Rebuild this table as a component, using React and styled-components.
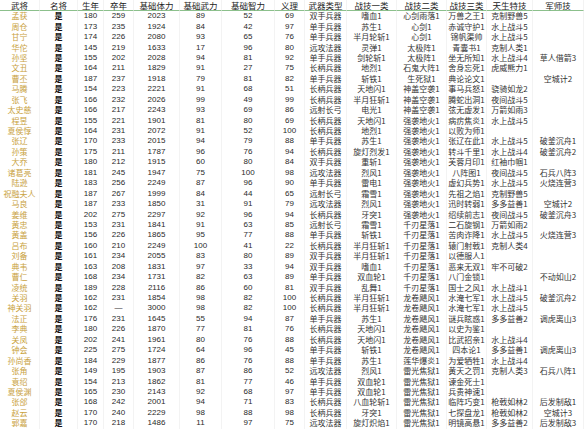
import styled, { createGlobalStyle } from "styled-components";

const GlobalStyle = createGlobalStyle`
  html, body {
    margin: 0;
    padding: 0;
    background: #fff;
  }
  body {
    font-family: "Noto Sans CJK SC", sans-serif;
  }
`;

const widths = [40, 38, 26, 30, 46, 42, 53, 30, 42, 50, 50, 40, 46, 51];

const headers = [
  "武将", "名将", "生年", "卒年", "基础体力", "基础武力", "基础智力",
  "义理", "武器类型", "战技一类", "战技二类", "战技三类", "天生特技", "军师技",
];

const rows = [
  ["孟获", "是", "180", "259", "2023", "89", "52", "69", "双手兵器", "嗜血1", "心剑雨落1", "万兽之王1", "克制野兽5", ""],
  ["周仓", "是", "173", "235", "1924", "84", "42", "97", "单手兵器", "苏生1", "心剑1", "赤诚守护1", "水上战斗5", ""],
  ["甘宁", "是", "174", "226", "2080", "93", "65", "76", "单手兵器", "半月轮斩1", "心剑1", "锦帆渠帅", "水上战斗5", ""],
  ["华佗", "是", "145", "219", "1633", "17", "96", "80", "远攻法器", "灵弹1", "太极阵1", "青囊书1", "克制人类1", ""],
  ["孙坚", "是", "155", "202", "2028", "94", "81", "92", "单手兵器", "剑轮斩1", "太极阵1", "坐无所知1", "水上战斗4", "草人借箭3"],
  ["文丑", "是", "164", "211", "1829", "91", "27", "75", "长柄兵器", "地烈1", "石鬼大阵1", "舍身忘死1", "虎威熊力1", ""],
  ["曹丕", "是", "187", "237", "1918", "79", "81", "82", "单手兵器", "斩铁1", "生死狱1", "典论论文1", "", "空城计2"],
  ["马腾", "是", "154", "223", "2221", "91", "68", "51", "长柄兵器", "天地闪1", "神盖空袭1", "事马兵怒1", "骁骑如龙2", ""],
  ["张飞", "是", "166", "232", "2026", "99", "49", "99", "长柄兵器", "半月狂斩1", "神盖空袭1", "腾蛇出洞1", "夜间战斗5", ""],
  ["太史慈", "是", "166", "217", "2243", "93", "69", "86", "远射长弓", "电光1", "神盖空袭1", "弦无虚发1", "万箭如雨3", ""],
  ["程昱", "是", "155", "221", "1901", "81", "80", "69", "长柄兵器", "天地闪1", "强袭地火1", "病疠焦炎1", "水上战斗5", ""],
  ["夏侯惇", "是", "164", "231", "2072", "91", "52", "100", "长柄兵器", "地烈1", "强袭地火1", "以败为师1", "", ""],
  ["张辽", "是", "170", "233", "2015", "94", "79", "88", "单手兵器", "苏生1", "强袭地火1", "张辽在此1", "水上战斗5", "破釜沉舟1"],
  ["孙策", "是", "175", "211", "1787", "96", "76", "94", "长柄兵器", "旋灯烈发1", "强袭地火1", "转斗千里1", "水上战斗4", "破釜沉舟2"],
  ["大乔", "是", "180", "212", "1915", "60", "80", "84", "双手兵器", "重斩1", "强袭地火1", "芙蓉月印1", "红袖巾帼1", ""],
  ["诸葛亮", "是", "181", "245", "1947", "75", "100", "98", "远攻法器", "烈风1", "强袭地火1", "八阵图1", "夜间战斗5", "石兵八阵3"],
  ["陆逊", "是", "183", "256", "2249", "87", "96", "90", "单手兵器", "雷电1", "强袭地火1", "虚幻兵势1", "水上战斗5", "火烧连营3"],
  ["祝融夫人", "是", "187", "267", "1999", "84", "44", "65", "远射长弓", "霜雪1", "强袭地火1", "先祖之焰1", "克制野兽5", ""],
  ["马良", "是", "187", "233", "1850", "31", "91", "79", "远攻法器", "烈风1", "强袭地火1", "迅时转弱1", "多多益善1", "空城计2"],
  ["姜维", "是", "202", "275", "2297", "92", "96", "94", "长柄兵器", "牙突1", "强袭地火1", "绍续前志1", "夜间战斗5", "破釜沉舟3"],
  ["黄忠", "是", "153", "231", "1841", "91", "63", "85", "远射长弓", "霜雪1", "千刃星落1", "二石旋钢1", "万箭如雨2", ""],
  ["黄盖", "是", "156", "226", "1865", "95", "77", "88", "单手兵器", "斩铁1", "千刃星落1", "苦肉诈降1", "水上战斗5", "火烧连营3"],
  ["吕布", "是", "160", "210", "2249", "100", "41", "22", "长柄兵器", "半月狂斩1", "千刃星落1", "辕门射戟1", "克制人类4", ""],
  ["刘备", "是", "161", "234", "2055", "83", "80", "89", "双手兵器", "半月狂斩1", "千刃星落1", "以德服人1", "", ""],
  ["典韦", "是", "163", "208", "1831", "97", "33", "94", "双手兵器", "嗜血1", "千刃星落1", "恶来无双1", "牢不可破2", ""],
  ["曹仁", "是", "168", "234", "1731", "82", "63", "89", "单手兵器", "双血轮1", "千刃星落1", "八门金锁1", "", "不动如山2"],
  ["凌统", "是", "189", "228", "2116", "86", "60", "81", "双手兵器", "乱舞1", "千刃星落1", "国士之风1", "水上战斗1", ""],
  ["关羽", "是", "162", "231", "1854", "98", "82", "100", "长柄兵器", "半月狂斩1", "龙卷飓风1", "水淹七军1", "水上战斗5", "破釜沉舟2"],
  ["神关羽", "是", "162", "—", "3000", "98", "82", "100", "长柄兵器", "半月狂斩1", "龙卷飓风1", "水淹七军1", "水上战斗5", ""],
  ["法正", "是", "176", "231", "1645", "55", "94", "87", "单手兵器", "苏生1", "龙卷飓风1", "谜兵眩惑1", "多多益善2", "调虎离山3"],
  ["李典", "是", "180", "226", "1870", "77", "81", "76", "长柄兵器", "天地闪1", "龙卷飓风1", "以史为鉴1", "", ""],
  ["关凤", "是", "202", "241", "1961", "80", "76", "88", "长柄兵器", "天地闪1", "龙卷飓风1", "比武招亲1", "水上战斗4", ""],
  ["钟会", "是", "225", "275", "1724", "64", "96", "45", "单手兵器", "斩铁1", "龙卷飓风1", "四本论1", "多多益善1", "调虎离山3"],
  ["孙尚香", "是", "184", "229", "1877", "86", "76", "88", "单手兵器", "苏生1", "莲华爆炎1", "为爱牺牲1", "水上战斗4", ""],
  ["张角", "是", "149", "195", "1903", "87", "86", "52", "远攻法器", "烈风1", "雷光焦狱1", "黄天之罚1", "克制人类3", "石兵八阵1"],
  ["袁绍", "是", "154", "213", "1862", "81", "77", "46", "单手兵器", "双血轮1", "雷光焦狱1", "谏金死士1", "", ""],
  ["夏侯渊", "是", "165", "230", "2143", "92", "68", "97", "单手兵器", "双血轮1", "雷光焦狱1", "兵贵神速1", "", ""],
  ["张郃", "是", "168", "242", "2001", "94", "71", "83", "长柄兵器", "八血轮斩1", "雷光焦狱1", "临阵巧变1", "枪戟如林2", "后发制敌1"],
  ["赵云", "是", "170", "240", "2229", "98", "88", "98", "长柄兵器", "牙突1", "雷光焦狱1", "七探盘龙1", "枪戟如林2", "空城计3"],
  ["郭嘉", "是", "170", "218", "1486", "11", "97", "75", "远攻法器", "旋灯炽焰1", "雷光焦狱1", "明镜高悬1", "多多益善2", "后发制敌3"],
];

const Sheet = styled.div`
  display: grid;
  grid-template-columns: ${widths.map((w) => `${w}px`).join(" ")};
  grid-template-rows: 11px repeat(${rows.length}, 10.44px);
  width: 584px;
  background: #fff;
`;

const Cell = styled.div`
  display: flex;
  align-items: center;
  justify-content: center;
  box-sizing: border-box;
  white-space: nowrap;
  line-height: 10px;
  border-right: 1px solid #f3f3f3;
  font-family: "Noto Sans CJK SC", sans-serif;
  font-size: 8px;
  color: #333;
`;

const HeadCell = styled(Cell)`
  font-size: 8.5px;
  color: #222;
  border-bottom: 1px solid #8cc08c;
`;

const NameCell = styled(Cell)`
  color: #c9a23e;
`;

const FlagCell = styled(Cell)`
  font-weight: 700;
  color: #111;
`;

const NumCell = styled(Cell)`
  font-family: "Liberation Sans", sans-serif;
  color: #2a2a2a;
`;

function renderCell(value, col, key) {
  if (col === 0) return <NameCell key={key}>{value}</NameCell>;
  if (col === 1) return <FlagCell key={key}>{value}</FlagCell>;
  if (col >= 2 && col <= 7) return <NumCell key={key}>{value}</NumCell>;
  return <Cell key={key}>{value}</Cell>;
}

export default function App() {
  return (
    <>
      <GlobalStyle />
      <Sheet>
        {headers.map((h) => (
          <HeadCell key={h}>{h}</HeadCell>
        ))}
        {rows.map((row, r) => row.map((v, c) => renderCell(v, c, `${r}-${c}`)))}
      </Sheet>
    </>
  );
}
